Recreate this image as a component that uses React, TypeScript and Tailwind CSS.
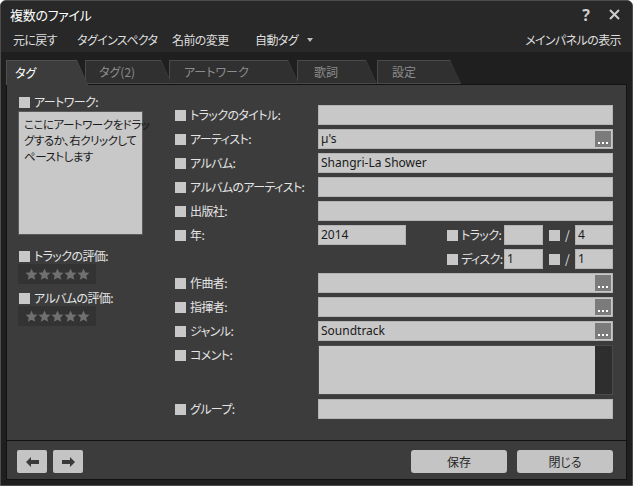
import React from "react"

const jp = "font-['Noto_Sans_CJK_JP',sans-serif] [font-feature-settings:'palt']"
const latin = "font-['Noto_Sans','Noto_Sans_CJK_JP',sans-serif]"
const label = "text-[12px] text-[#e4e4e4] leading-none whitespace-nowrap tracking-[-0.6px]"

const tabs = [
  { label: "タグ", active: true, cls: "w-[82px] z-50", text: "pl-[8px]" },
  { label: "タグ(2)", active: false, cls: "w-[87px] -ml-[3px] z-40", text: "pl-[13px]" },
  { label: "アートワーク", active: false, cls: "w-[130px] -ml-[3px] z-30", text: "pl-[14px]" },
  { label: "歌詞", active: false, cls: "w-[80px] -ml-[2px] z-20", text: "pl-[16px]" },
  { label: "設定", active: false, cls: "w-[84px] z-10", text: "pl-[14px]" },
]

function Check() {
  return <span className="block w-[11px] h-[11px] bg-[#c8c8c8] shrink-0" />
}

function Dots() {
  return (
    <span className="flex items-end justify-center gap-[2px] pb-[3px] w-[16px] h-[16px] bg-[#7b7b7b] mr-[1px] shrink-0">
      <span className="w-[2px] h-[2px] bg-white" />
      <span className="w-[2px] h-[2px] bg-white" />
      <span className="w-[2px] h-[2px] bg-white" />
    </span>
  )
}

function Field({ value, dots, className = "flex-1" }: { value?: string; dots?: boolean; className?: string }) {
  return (
    <div className={`${className} h-[20px] flex items-center bg-[#c8c8c8] border border-[#b4b4b4]`}>
      <span className={`flex-1 pl-[2px] text-[12px] text-[#1a1a1a] ${latin}`}>{value}</span>
      {dots && <Dots />}
    </div>
  )
}

function Row({ text, children }: { text?: string; children: React.ReactNode }) {
  return (
    <div className="flex items-center h-[20px]">
      <div className="w-[143px] flex items-center gap-[4px] shrink-0">
        {text && <Check />}
        {text && <span className={label}>{text}</span>}
      </div>
      {children}
    </div>
  )
}

function NumGroup({ text, a, b }: { text: string; a?: string; b?: string }) {
  return (
    <div className="ml-auto w-[166px] flex items-center">
      <Check />
      <span className={`ml-[3px] w-[43px] ${label}`}>{text}</span>
      <Field value={a} className="w-[39px]" />
      <span className="ml-[6px]"><Check /></span>
      <span className={`ml-[5px] w-[10px] ${label}`}>/</span>
      <Field value={b} className="flex-1" />
    </div>
  )
}

function Star() {
  return (
    <svg width="13" height="13" viewBox="0 0 24 24">
      <path d="M12 1l3.2 7.2 7.8.7-5.9 5.2 1.8 7.7L12 17.8 5.1 21.8l1.8-7.7L1 8.9l7.8-.7z" fill="#707070" />
    </svg>
  )
}

function Stars() {
  return (
    <div className="mt-[1px] w-[78px] h-[20px] bg-[#333333] flex items-center pl-[7px]">
      <Star /><Star /><Star /><Star /><Star />
    </div>
  )
}

function Arrow({ dir }: { dir: "left" | "right" }) {
  return (
    <button className="w-[30px] h-[23px] rounded-[2px] bg-[#c4c4c4] flex items-center justify-center">
      <svg width="13" height="10" viewBox="0 0 13 10" className={dir === "right" ? "rotate-180" : ""}>
        <polygon points="0,5 5,0 5,3 13,3 13,7 5,7 5,10" fill="#3a3a3a" />
      </svg>
    </button>
  )
}

export default function App() {
  return (
    <div className={`w-[633px] h-[486px] flex flex-col bg-[#1f1f1f] border border-[#4d4d4d] rounded-t-[6px] overflow-hidden ${jp}`}>
      {/* title bar */}
      <div className="h-[27px] shrink-0 bg-[#282828] flex items-center pl-[9px] pr-[12px]">
        <span className="text-[13px] text-white tracking-[-0.3px]">複数のファイル</span>
        <span className={`ml-auto text-[16px] font-bold text-[#cfcfcf] leading-none ${latin}`}>?</span>
        <svg className="ml-[19px]" width="11" height="11" viewBox="0 0 11 11">
          <path d="M1 1l9 9M10 1l-9 9" stroke="#cfcfcf" strokeWidth="2" />
        </svg>
      </div>

      {/* menu bar */}
      <div className="h-[24px] shrink-0 bg-[#282828] flex items-center pl-[12px] pr-[11px] text-[12px] text-[#dedede] tracking-[-0.6px] whitespace-nowrap">
        <span className="w-[64px]">元に戻す</span>
        <span className="w-[95px]">タグインスペクタ</span>
        <span className="w-[83px]">名前の変更</span>
        <span>自動タグ</span>
        <svg className="ml-[9px]" width="6" height="4" viewBox="0 0 6 4">
          <polygon points="0,0 6,0 3,4" fill="#bdbdbd" />
        </svg>
        <span className="ml-auto">メインパネルの表示</span>
      </div>

      {/* tab strip */}
      <div className="h-[32px] shrink-0 flex items-end pl-[5px]">
        {tabs.map((t) => (
          <div
            key={t.label}
            className={`relative ${t.cls} ${t.active ? "-mb-px h-[25px] bg-[#505050]" : "h-[24px] bg-[#4a4a4a]"} [clip-path:polygon(0_0,calc(100%-11px)_0,100%_100%,0_100%)] pt-px pl-px`}
          >
            <div
              className={`h-full flex items-center ${t.text} text-[12px] [clip-path:polygon(0_0,calc(100%-11px)_0,100%_100%,0_100%)] ${
                t.active ? "bg-[#3c3c3c] text-white" : "bg-[#303030] text-[#8c8c8c] border-b border-[#4a4a4a]"
              }`}
            >
              {t.label}
            </div>
          </div>
        ))}
      </div>

      {/* panel */}
      <div className="flex-1 mx-[5px] mb-[5px] border border-[#121212] bg-[#3c3c3c] flex flex-col">
        <div className="flex-1 flex">
          {/* left column */}
          <div className="w-[125px] ml-[11px] pt-[10px] shrink-0">
            <div className="h-[14px] flex items-center gap-[4px] pl-[1px]">
              <Check />
              <span className={label}>アートワーク:</span>
            </div>
            <div className="mt-[2px] h-[124px] bg-[#c8c8c8] border border-[#5a5a5a] px-[5px] pt-[4px] text-[11.5px] leading-[16px] text-[#1a1a1a] whitespace-nowrap tracking-[-0.5px]">
              ここにアートワークをドラッ<br />グするか、右クリックして<br />ペーストします
            </div>
            <div className="mt-[14px] h-[14px] flex items-center gap-[4px] pl-[1px]">
              <Check />
              <span className={label}>トラックの評価:</span>
            </div>
            <Stars />
            <div className="mt-[7px] h-[14px] flex items-center gap-[4px] pl-[1px]">
              <Check />
              <span className={label}>アルバムの評価:</span>
            </div>
            <Stars />
          </div>

          {/* right column */}
          <div className="flex-1 ml-[32px] mr-[13px] pt-[20px] flex flex-col gap-[4px]">
            <Row text="トラックのタイトル:"><Field /></Row>
            <Row text="アーティスト:"><Field value="µ's" dots /></Row>
            <Row text="アルバム:"><Field value="Shangri-La Shower" /></Row>
            <Row text="アルバムのアーティスト:"><Field /></Row>
            <Row text="出版社:"><Field /></Row>
            <Row text="年:">
              <Field value="2014" className="w-[88px]" />
              <NumGroup text="トラック:" b="4" />
            </Row>
            <Row>
              <NumGroup text="ディスク:" a="1" b="1" />
            </Row>
            <Row text="作曲者:"><Field dots /></Row>
            <Row text="指揮者:"><Field dots /></Row>
            <Row text="ジャンル:"><Field value="Soundtrack" dots /></Row>
            <div className="flex h-[50px]">
              <div className="w-[143px] h-[20px] flex items-center gap-[4px] shrink-0">
                <Check />
                <span className={label}>コメント:</span>
              </div>
              <div className="flex-1 flex bg-[#c8c8c8] border border-[#4a4a4a]">
                <div className="flex-1" />
                <div className="w-[17px] bg-[#2e2e2e]" />
              </div>
            </div>
            <Row text="グループ:"><Field /></Row>
          </div>
        </div>

        {/* bottom bar */}
        <div className="h-[39px] shrink-0 border-t border-[#121212] flex items-start pt-[9px] pl-[10px] pr-[13px]">
          <div className="flex gap-[6px]">
            <Arrow dir="left" />
            <Arrow dir="right" />
          </div>
          <div className="ml-auto flex gap-[10px]">
            <button className="w-[96px] h-[23px] rounded-[3px] bg-[#c4c4c4] text-[12px] text-[#2a2a2a]">保存</button>
            <button className="w-[96px] h-[23px] rounded-[3px] bg-[#c4c4c4] text-[12px] text-[#2a2a2a]">閉じる</button>
          </div>
        </div>
      </div>
    </div>
  )
}
